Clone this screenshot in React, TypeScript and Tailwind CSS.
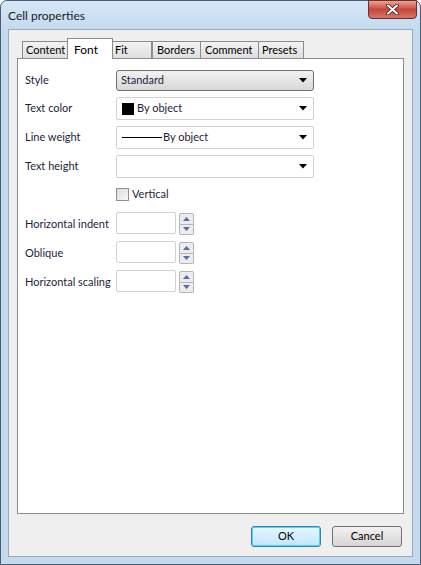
import React from "react";

const Arrow = () => (
  <svg width="8" height="5" viewBox="0 0 8 5" className="shrink-0">
    <path d="M0 0H8L4 4.5Z" fill="#000" />
  </svg>
);

const Spinner = () => (
  <div className="flex flex-col w-[15px] h-[22px] ml-[3px] mt-[1px]">
    <div className="flex-1 flex items-center justify-center border border-[#b5b5b5] bg-[#ececec] rounded-t-[2px]">
      <svg width="7" height="4" viewBox="0 0 7 4"><path d="M0 4H7L3.5 0Z" fill="#4f6db0" /></svg>
    </div>
    <div className="flex-1 flex items-center justify-center border border-t-0 border-[#b5b5b5] bg-[#ececec] rounded-b-[2px]">
      <svg width="7" height="4" viewBox="0 0 7 4"><path d="M0 0H7L3.5 4Z" fill="#4f6db0" /></svg>
    </div>
  </div>
);

const Label = ({ children }: { children: React.ReactNode }) => (
  <div className="w-[98px] shrink-0 pl-[7px] whitespace-nowrap">{children}</div>
);

const Combo = ({ children }: { children?: React.ReactNode }) => (
  <div className="w-[198px] h-[23px] border border-[#d2d2d2] rounded-[2px] bg-white flex items-center pl-[5px] pr-[6px]">
    <div className="flex-1 flex items-center">{children}</div>
    <Arrow />
  </div>
);

const SpinRow = ({ label }: { label: string }) => (
  <div className="flex items-start h-[22px]">
    <Label><div className="pt-[4px]">{label}</div></Label>
    <div className="w-[60px] h-[22px] border border-[#d2d2d2] rounded-[2px] bg-white" />
    <Spinner />
  </div>
);

const tabBase =
  "h-[18px] pl-[3px] border border-b-0 border-[#898c95] bg-gradient-to-b from-[#f3f3f3] to-[#dedede] flex items-center";

export default function App() {
  return (
    <div
      className="w-[421px] h-[565px] bg-[#c3daf0] border border-[#4d5c70] rounded-t-[7px] flex flex-col text-[11px] text-black"
      style={{ fontFamily: 'Lato, "Noto Sans", sans-serif' }}
    >
      <div className="h-[28px] flex items-start justify-between bg-gradient-to-b from-[#d6e8f8] to-[#c3daf0] rounded-t-[7px]">
        <div className="pl-[7px] pt-[6px] text-[12px] text-[#1a1a1a]">Cell properties</div>
        <div className="w-[49px] h-[19px] mr-[3px] -mt-px rounded-b-[4px] border border-[#6b2d2d] bg-gradient-to-b from-[#e8a393] via-[#c7453a] to-[#d4766a] flex items-center justify-center">
          <svg width="13" height="11" viewBox="0 0 13 11">
            <path d="M2 1.5L11 9.5M11 1.5L2 9.5" stroke="#3d1a1a" strokeWidth="3.6" strokeLinecap="round" />
            <path d="M2 1.5L11 9.5M11 1.5L2 9.5" stroke="#ffffff" strokeWidth="2" strokeLinecap="round" />
          </svg>
        </div>
      </div>
      <div className="flex-1 mx-[7px] mb-[7px] bg-[#efefef] border border-[#9ba8b8] flex flex-col px-[8px]">
        <div className="flex items-end h-[29px] pl-[5px]">
          <div className={`${tabBase} w-[46px]`}>Content</div>
          <div className="h-[21px] w-[46px] pl-[6px] border border-b-0 border-[#898c95] bg-white flex items-start pt-[2px] -mx-px relative z-10 text-[12px]">Font</div>
          <div className={`${tabBase} w-[40px] border-l-0`}>Fit</div>
          <div className={`${tabBase} w-[49px] pl-[4px]`}>Borders</div>
          <div className={`${tabBase} w-[58px] border-l-0 pl-[4px]`}>Comment</div>
          <div className={`${tabBase} w-[45px] border-l-0`}>Presets</div>
        </div>
        <div className="h-[456px] bg-white border border-[#898c95] -mt-px flex flex-col pt-[11px] text-[#1e1e3c]">
          <div className="flex items-center h-[21px]">
            <Label>Style</Label>
            <div className="w-[198px] h-[21px] border border-[#707070] rounded-[3px] bg-gradient-to-b from-[#f2f2f2] to-[#d8d8d8] flex items-center pl-[4px] pr-[6px]">
              <div className="flex-1">Standard</div>
              <Arrow />
            </div>
          </div>
          <div className="flex items-center h-[23px] mt-[6px]">
            <Label>Text color</Label>
            <Combo>
              <div className="w-[12px] h-[12px] bg-black mr-[3px]" />
              <span>By object</span>
            </Combo>
          </div>
          <div className="flex items-center h-[23px] mt-[6px]">
            <Label>Line weight</Label>
            <Combo>
              <div className="w-[40px] h-px bg-black mr-[1px]" />
              <span>By object</span>
            </Combo>
          </div>
          <div className="flex items-center h-[23px] mt-[6px]">
            <Label>Text height</Label>
            <Combo />
          </div>
          <div className="flex items-center h-[14px] mt-[9px]">
            <div className="w-[98px] shrink-0" />
            <div className="w-[13px] h-[13px] border border-[#8f8f8f] bg-gradient-to-br from-[#dcdcdc] to-[#f8f8f8] mr-[3px]" />
            <span>Vertical</span>
          </div>
          <div className="flex flex-col gap-[7px] mt-[11px]">
            <SpinRow label="Horizontal indent" />
            <SpinRow label="Oblique" />
            <SpinRow label="Horizontal scaling" />
          </div>
        </div>
        <div className="flex justify-end gap-[11px] mt-[12px] pr-[2px]">
          <div className="w-[70px] h-[21px] rounded-[3px] border border-[#3c7fb1] bg-gradient-to-b from-[#eaf6fd] to-[#bee6fd] shadow-[inset_0_0_0_1px_#48d7fb] flex items-center justify-center">OK</div>
          <div className="w-[70px] h-[21px] rounded-[3px] border border-[#707070] bg-gradient-to-b from-[#f2f2f2] to-[#d5d5d5] flex items-center justify-center">Cancel</div>
        </div>
      </div>
    </div>
  );
}
